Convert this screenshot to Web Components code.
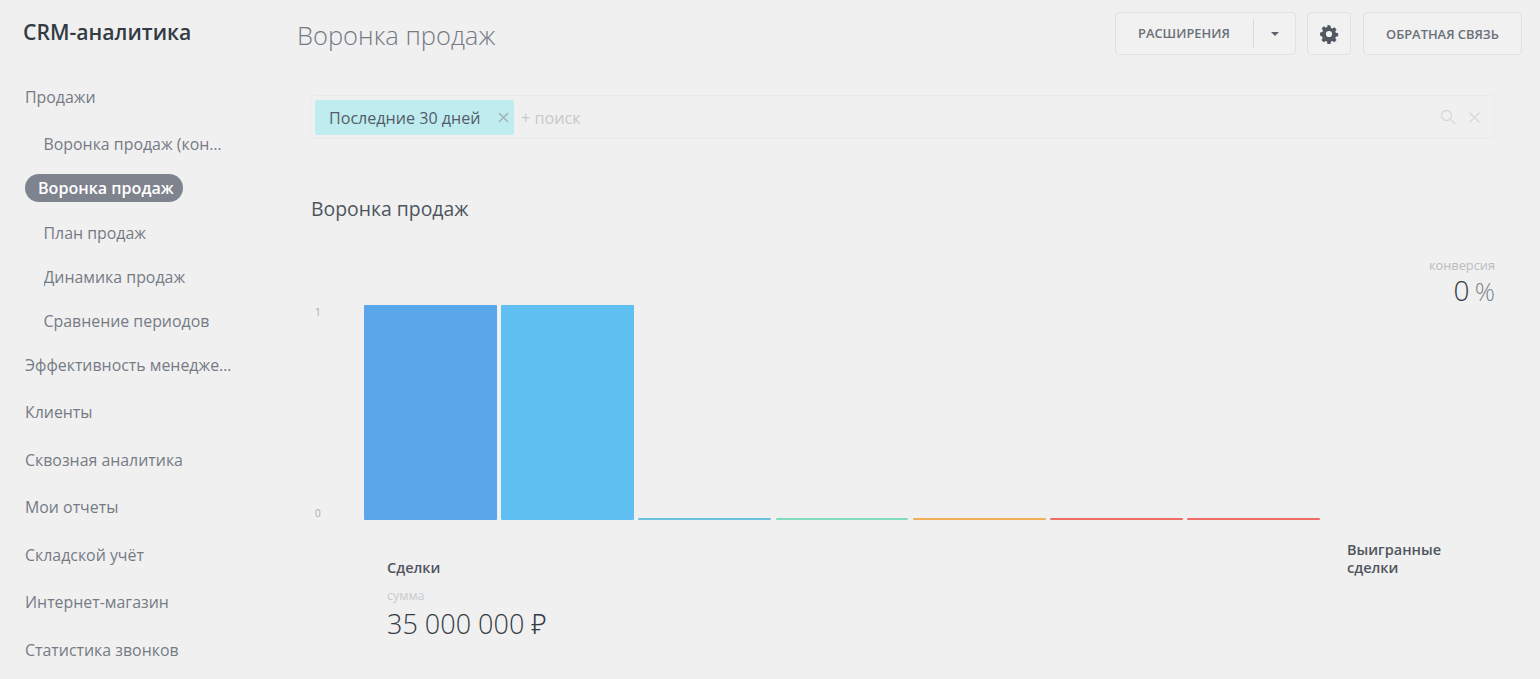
<!DOCTYPE html>
<html lang="ru"><head><meta charset="utf-8"><title>CRM-аналитика</title>
<style>
html,body{margin:0;height:679px;overflow:hidden;background:#f0f0f0;font-family:"Open Sans","Noto Sans",sans-serif;color:#535c69}
</style></head><body>
<crm-app></crm-app>
<script>
const def=(name,css,html)=>customElements.define(name,class extends HTMLElement{
  constructor(){super();this.attachShadow({mode:'open'}).innerHTML=`<style>${css}</style>${html}`;}
});
def('nav-item',`
:host{display:flex;align-items:center;height:var(--h,47.5px);font-size:15.9px;color:#757b85;white-space:nowrap;padding-left:25px;box-sizing:border-box;width:233px}
:host([sub]){--h:44px;padding-left:43.5px;width:228px}
:host([active]){--h:44px;padding-left:25px}
span{overflow:hidden;text-overflow:ellipsis;display:block}
:host([active]) span{background:#7f838e;color:#fff;font-weight:600;border-radius:14px;padding:0 9px 0 13px;line-height:28px;font-size:16.1px}
`,`<span><slot></slot></span>`);
def('crm-sidebar',`
:host{display:block;width:297px;flex:none}
h1{margin:0;padding:16px 0 0 23px;font-size:21.2px;line-height:32px;font-weight:600;color:#333b45}
nav{display:flex;flex-direction:column;padding-top:24px}
`,`<h1>CRM-аналитика</h1><nav>
<nav-item style="--h:50px">Продажи</nav-item>
<nav-item sub>Воронка продаж (конверсия)</nav-item>
<nav-item active>Воронка продаж</nav-item>
<nav-item sub style="margin-top:1px">План продаж</nav-item>
<nav-item sub>Динамика продаж</nav-item>
<nav-item sub>Сравнение периодов</nav-item>
<nav-item style="--h:44px;margin-bottom:1.300px">Эффективность менеджеров</nav-item>
<nav-item>Клиенты</nav-item>
<nav-item>Сквозная аналитика</nav-item>
<nav-item>Мои отчеты</nav-item>
<nav-item>Складской учёт</nav-item>
<nav-item>Интернет-магазин</nav-item>
<nav-item>Статистика звонков</nav-item>
</nav>`);
def('ui-button',`
:host{display:inline-flex;align-items:center;justify-content:center;height:43px;box-sizing:border-box;border:1px solid #dfe1e4;border-radius:4px;font-size:12.9px;font-weight:600;color:#6a7079;white-space:nowrap;background:#f1f1f1}
`,`<slot></slot>`);
def('crm-header',`
:host{display:flex;align-items:flex-start;justify-content:space-between;padding:12px 18px 0 0;height:95px;box-sizing:border-box}
h2{margin:0;font-size:25.5px;font-weight:300;color:#747b85;line-height:46px}
.acts{display:flex}
.ext{width:181px;justify-content:flex-start;padding-left:22px}
.ext b{font-weight:600;padding-right:23px;border-right:1px solid #d9dbde;line-height:29px}
.ext i{display:block;width:0;height:0;border:4.5px solid transparent;border-top-color:#5d636c;border-bottom:0;margin-left:17px}
.gear{width:44px;margin:0 12px 0 11px}
.fb{width:159px}
`,`<h2>Воронка продаж</h2><div class="acts">
<ui-button class="ext"><b>РАСШИРЕНИЯ</b><i></i></ui-button>
<ui-button class="gear"><svg width="20" height="20" viewBox="0 0 24 24" fill="#525862"><path fill-rule="evenodd" d="M13.9 2l.5 2.7c.6.2 1.2.4 1.7.7l2.3-1.6 2.7 2.7-1.6 2.3c.3.5.5 1.1.7 1.7l2.8.5v3.8l-2.8.5c-.2.6-.4 1.200-.7 1.700l1.600 2.300-2.700 2.700-2.300-1.600c-.5.3-1.100.5-1.700.7l-.5 2.800h-3.800l-.5-2.800c-.6-.2-1.200-.4-1.700-.7l-2.300 1.600-2.700-2.700 1.600-2.300c-.3-.5-.5-1.100-.7-1.700L1.300 13.900v-3.800l2.800-.5c.2-.6.4-1.200.7-1.700L3.200 5.500l2.700-2.700 2.300 1.600c.5-.3 1.100-.5 1.700-.7l.5-2.700zM12 8.300a3.700 3.700 0 1 0 0 7.400 3.700 3.700 0 0 0 0-7.400z"/></svg></ui-button>
<ui-button class="fb">ОБРАТНАЯ СВЯЗЬ</ui-button>
</div>`);
def('filter-bar',`
:host{display:flex;align-items:center;height:44px;margin-right:45px;box-sizing:border-box;border:1px solid #e9eaeb;border-radius:4px;padding-left:4px;margin-left:13px}
.chip{display:flex;align-items:center;width:199px;height:35px;box-sizing:border-box;background:#bfecef;border-radius:2px;padding-left:14px;font-size:16.1px;color:#535c69;white-space:nowrap;justify-content:space-between;padding-right:5px}
.chip span{padding-top:1px}
.chip svg{flex:none}
.ph{font-size:16.2px;color:#c6c9cd;margin-left:7px;flex:1;padding-top:1px}
.ic{display:flex;gap:13px;align-items:center;padding-right:14px}
`,`<div class="chip"><span>Последние 30 дней</span><svg width="11" height="11" viewBox="0 0 11 11" stroke="#a5b5ba" stroke-width="1.700"><path d="M1 1l9 9M10 1l-9 9"/></svg></div>
<span class="ph">+ поиск</span>
<div class="ic"><svg width="16" height="16" viewBox="0 0 16 16" fill="none" stroke="#d6d8da" stroke-width="1.300"><circle cx="6.500" cy="6.500" r="5"/><path d="M10.500 10.500l5 4.500"/></svg><svg width="11" height="11" viewBox="0 0 11 11" stroke="#d6d8da" stroke-width="1.300"><path d="M.5.500l10 10M10.500.500l-10 10"/></svg></div>`);
def('funnel-bar',`
:host{display:block;height:var(--v);background:var(--c);align-self:end;border-radius:1px}
`,``);
def('funnel-chart',`
:host{display:block;margin:0 45px 0 14px;position:relative}
h3{margin:0;font-size:19.4px;font-weight:400;color:#4e555e;line-height:28px;padding-top:56px}
.conv{position:absolute;right:0;top:118px;text-align:right}
.conv small{display:block;font-size:12.8px;color:#b9bcc0;line-height:16px}
.conv div{font-size:28px;font-weight:300;color:#333b45;line-height:34px}
.conv div span{font-size:25px;color:#80858c;margin-left:-2px}
.plot{display:grid;grid-template-columns:53px 956px;height:215px;margin-top:82px}
.axis{display:flex;flex-direction:column;justify-content:space-between;font-size:10px;color:#a9adb2;padding:0 0 0 4px;height:215px}
.axis span{line-height:14px}
.bars{display:grid;grid-template-columns:repeat(7,1fr);gap:4.500px;height:215px}
.foot{display:flex;justify-content:space-between;padding-left:76px;margin-top:22px;height:110px}
.foot b{display:block;font-size:14.5px;font-weight:600;color:#50565e;line-height:18px}
.first b{padding-top:17px}
.first small{display:block;font-size:12.5px;color:#c6c9cc;line-height:16px;margin-top:11px}
.first .sum{font-size:27px;font-weight:300;color:#333b45;line-height:36px;margin-top:2px}
.last{width:148px;margin-top:-1px}
`,`<h3>Воронка продаж</h3>
<div class="conv"><small>конверсия</small><div>0 <span>%</span></div></div>
<div class="plot"><div class="axis"><span>1</span><span>0</span></div>
<div class="bars">
<funnel-bar style="--v:215px;--c:#5aa6ea"></funnel-bar>
<funnel-bar style="--v:215px;--c:#5fbff0"></funnel-bar>
<funnel-bar style="--v:2px;--c:#6cc4dc"></funnel-bar>
<funnel-bar style="--v:2px;--c:#7fdcc0"></funnel-bar>
<funnel-bar style="--v:2px;--c:#f0b05a"></funnel-bar>
<funnel-bar style="--v:2px;--c:#ee6d64"></funnel-bar>
<funnel-bar style="--v:2px;--c:#ee6d64"></funnel-bar>
</div></div>
<div class="foot"><div class="first"><b>Сделки</b><small>сумма</small><div class="sum">35 000 000 ₽</div></div>
<div class="last"><b>Выигранные<br>сделки</b></div></div>`);
def('crm-app',`
:host{display:flex;height:679px;overflow:hidden}
main{flex:1;min-width:0}
`,`<crm-sidebar></crm-sidebar><main><crm-header></crm-header><filter-bar></filter-bar><funnel-chart></funnel-chart></main>`);
</script></body></html>
